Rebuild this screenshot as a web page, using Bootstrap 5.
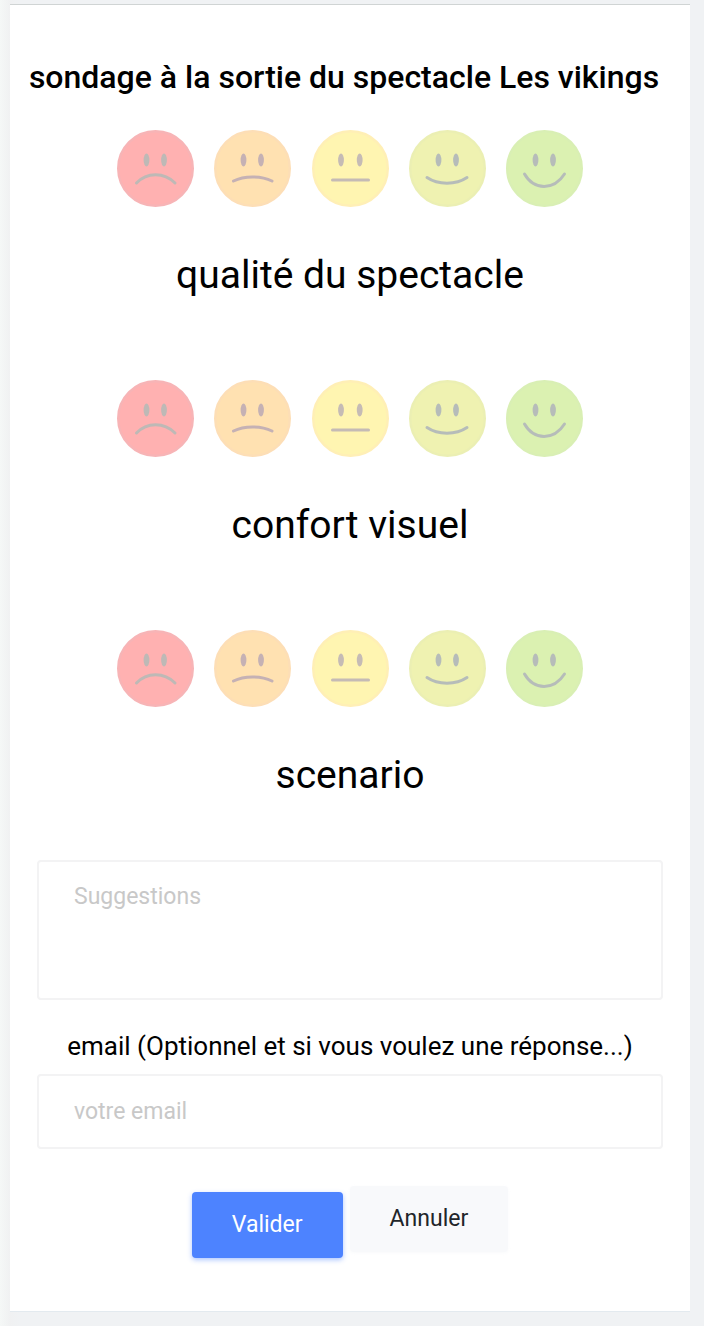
<!DOCTYPE html>
<html lang="fr">
<head>
<meta charset="utf-8">
<meta name="viewport" content="width=device-width, initial-scale=1">
<title>Sondage</title>
<link href="https://cdn.jsdelivr.net/npm/bootstrap@5.3.0/dist/css/bootstrap.min.css" rel="stylesheet">
<style>
  body { background: linear-gradient(to right, #f5f8f7, #f0f1f2 10px, #f0f2f4 20px); color: #000; font-family: Roboto, sans-serif; }
  .survey { margin: 4px 14px 14px 10px; padding: 48px 27px 53px; border-top: 1px solid #d0d4d4; border-bottom: 1px solid #e3eaef; }
  .survey-title { font-size: 32px; line-height: 48px; font-weight: 500; margin: 0 0 29px -12px; }
  .rating { margin-bottom: 80px; }
  .rating:last-of-type { margin-bottom: 60px; }
  .faces { max-width: 466px; margin: 0 auto 43px; }
  .face { width: 77px; height: 77px; cursor: pointer; opacity: .3; display: block; }
  .btn-check:checked + label .face { opacity: 1; }
  .rating-name { font-size: 39px; line-height: 50px; }
  .field { border: 2px solid #f3f3f4; border-radius: 4px; font-size: 23px; line-height: 34px; padding: 18px 35px; resize: none; }
  .field::placeholder { color: #c8c8c8; }
  textarea.field { height: 140px; }
  input.field { height: 75px; }
  .email-label { font-size: 26px; line-height: 36px; margin: 28px 0 10px; }
  .actions { gap: 7px; margin-top: 37px; }
  .action { border: 0; border-radius: 4px; font-size: 23px; line-height: 34px; padding: 16px 40px; }
  .action-submit { --bs-btn-bg: #4d83ff; margin-top: 6px; box-shadow: 0 2px 5px rgba(77, 131, 255, .45); }
  .action-cancel { --bs-btn-bg: #f8f9fb; --bs-btn-color: #212529; margin-bottom: 6px; box-shadow: 0 1px 3px rgba(248, 249, 251, .9); }
</style>
</head>
<body>
<svg class="d-none" aria-hidden="true">
  <defs>
    <g id="eyes"><ellipse cx="29.500" cy="30" rx="2.900" ry="6.500"/><ellipse cx="47" cy="30" rx="2.900" ry="6.500"/></g>
    <symbol id="face1" viewBox="0 0 77 77"><circle cx="38.500" cy="38.500" r="37.300" fill="#ff0000" stroke="#e80a10" stroke-width="2.400"/><use href="#eyes" fill="#2b1a10"/><path d="M19.500 53C30 42 47 42 58 53" fill="none" stroke="#2b1a10" stroke-width="3" stroke-linecap="round"/></symbol>
    <symbol id="face2" viewBox="0 0 77 77"><circle cx="38.500" cy="38.500" r="37.300" fill="#ff9f00" stroke="#f99510" stroke-width="2.400"/><use href="#eyes" fill="#42000a"/><path d="M19.500 51C30 45.500 47 45.500 58 51" fill="none" stroke="#42000a" stroke-width="3" stroke-linecap="round"/></symbol>
    <symbol id="face3" viewBox="0 0 77 77"><circle cx="38.500" cy="38.500" r="37.300" fill="#ffdf00" stroke="#ffcc10" stroke-width="2.400"/><g fill="#42200f"><ellipse cx="29" cy="30" rx="2.900" ry="6.500"/><ellipse cx="47.700" cy="30" rx="2.900" ry="6.500"/></g><path d="M20.500 50H56.500" fill="none" stroke="#42200f" stroke-width="3" stroke-linecap="round"/></symbol>
    <symbol id="face4" viewBox="0 0 77 77"><circle cx="38.500" cy="38.500" r="37.300" fill="#cbd500" stroke="#c0cd08" stroke-width="2.400"/><use href="#eyes" fill="#10261c"/><path d="M18 47.500C29 55 47 55 58 47.500" fill="none" stroke="#10261c" stroke-width="3" stroke-linecap="round"/></symbol>
    <symbol id="face5" viewBox="0 0 77 77"><circle cx="38.500" cy="38.500" r="37.300" fill="#8bd400" stroke="#84cc0a" stroke-width="2.400"/><use href="#eyes" fill="#10261c"/><path d="M18.500 44C28 60.500 48 60.500 58.500 44" fill="none" stroke="#10261c" stroke-width="3" stroke-linecap="round"/></symbol>
  </defs>
</svg>
<main class="survey bg-white">
  <h1 class="survey-title text-center">sondage à la sortie du spectacle Les vikings</h1>
  <form>
    <section class="rating text-center" role="radiogroup" aria-labelledby="n1">
      <div class="faces d-flex justify-content-between">
        <div><input class="btn-check" type="radio" name="q1" id="q1a"><label class="d-block" for="q1a" aria-label="1"><svg class="face"><use href="#face1"/></svg></label></div>
        <div><input class="btn-check" type="radio" name="q1" id="q1b"><label class="d-block" for="q1b" aria-label="2"><svg class="face"><use href="#face2"/></svg></label></div>
        <div><input class="btn-check" type="radio" name="q1" id="q1c"><label class="d-block" for="q1c" aria-label="3"><svg class="face"><use href="#face3"/></svg></label></div>
        <div><input class="btn-check" type="radio" name="q1" id="q1d"><label class="d-block" for="q1d" aria-label="4"><svg class="face"><use href="#face4"/></svg></label></div>
        <div><input class="btn-check" type="radio" name="q1" id="q1e"><label class="d-block" for="q1e" aria-label="5"><svg class="face"><use href="#face5"/></svg></label></div>
      </div>
      <div class="rating-name" id="n1">qualité du spectacle</div>
    </section>
    <section class="rating text-center" role="radiogroup" aria-labelledby="n2">
      <div class="faces d-flex justify-content-between">
        <div><input class="btn-check" type="radio" name="q2" id="q2a"><label class="d-block" for="q2a" aria-label="1"><svg class="face"><use href="#face1"/></svg></label></div>
        <div><input class="btn-check" type="radio" name="q2" id="q2b"><label class="d-block" for="q2b" aria-label="2"><svg class="face"><use href="#face2"/></svg></label></div>
        <div><input class="btn-check" type="radio" name="q2" id="q2c"><label class="d-block" for="q2c" aria-label="3"><svg class="face"><use href="#face3"/></svg></label></div>
        <div><input class="btn-check" type="radio" name="q2" id="q2d"><label class="d-block" for="q2d" aria-label="4"><svg class="face"><use href="#face4"/></svg></label></div>
        <div><input class="btn-check" type="radio" name="q2" id="q2e"><label class="d-block" for="q2e" aria-label="5"><svg class="face"><use href="#face5"/></svg></label></div>
      </div>
      <div class="rating-name" id="n2">confort visuel</div>
    </section>
    <section class="rating text-center" role="radiogroup" aria-labelledby="n3">
      <div class="faces d-flex justify-content-between">
        <div><input class="btn-check" type="radio" name="q3" id="q3a"><label class="d-block" for="q3a" aria-label="1"><svg class="face"><use href="#face1"/></svg></label></div>
        <div><input class="btn-check" type="radio" name="q3" id="q3b"><label class="d-block" for="q3b" aria-label="2"><svg class="face"><use href="#face2"/></svg></label></div>
        <div><input class="btn-check" type="radio" name="q3" id="q3c"><label class="d-block" for="q3c" aria-label="3"><svg class="face"><use href="#face3"/></svg></label></div>
        <div><input class="btn-check" type="radio" name="q3" id="q3d"><label class="d-block" for="q3d" aria-label="4"><svg class="face"><use href="#face4"/></svg></label></div>
        <div><input class="btn-check" type="radio" name="q3" id="q3e"><label class="d-block" for="q3e" aria-label="5"><svg class="face"><use href="#face5"/></svg></label></div>
      </div>
      <div class="rating-name" id="n3">scenario</div>
    </section>
    <textarea class="field form-control d-block" placeholder="Suggestions" aria-label="Suggestions"></textarea>
    <label class="email-label d-block text-center" for="email">email (Optionnel et si vous voulez une réponse...)</label>
    <input class="field form-control" type="email" id="email" placeholder="votre email">
    <div class="actions d-flex justify-content-center">
      <button class="btn btn-primary action action-submit" type="submit">Valider</button>
      <button class="btn btn-light action action-cancel" type="reset">Annuler</button>
    </div>
  </form>
</main>
<script src="https://cdn.jsdelivr.net/npm/bootstrap@5.3.0/dist/js/bootstrap.bundle.min.js"></script>
</body>
</html>
